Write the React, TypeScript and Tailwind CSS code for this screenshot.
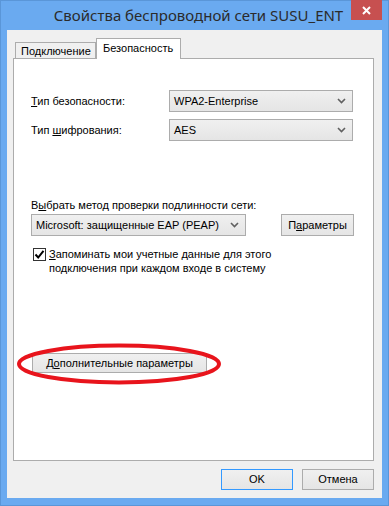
import React from "react";

const font = { fontFamily: '"Liberation Sans", Arial, sans-serif' };
const titleFont = { fontFamily: '"Noto Sans", "Open Sans", sans-serif' };

function Chevron() {
  return (
    <svg width="9" height="6" viewBox="0 0 9 6" className="flex-shrink-0">
      <path d="M1 1 L4.5 4.5 L8 1" fill="none" stroke="#606060" strokeWidth="1.6" />
    </svg>
  );
}

function Select({ value, className }: { value: string; className: string }) {
  return (
    <div
      className={`flex items-center justify-between h-[22px] pl-[4px] pr-[6px] border border-[#acacac] bg-gradient-to-b from-[#f0f0f0] to-[#e5e5e5] text-[11px] text-black whitespace-nowrap ${className}`}
    >
      <span>{value}</span>
      <Chevron />
    </div>
  );
}

function Button({ children, className }: { children: React.ReactNode; className: string }) {
  return (
    <div
      className={`flex items-center justify-center border bg-gradient-to-b from-[#f0f0f0] to-[#e5e5e5] text-[11px] text-black whitespace-nowrap ${className}`}
    >
      {children}
    </div>
  );
}

export default function App() {
  return (
    <div style={font} className="w-[389px] h-[506px] bg-[#6aaaf0] border border-[#5a96d8] flex flex-col">
      {/* Title bar */}
      <div className="relative h-[29px] flex items-center justify-center">
        <span style={titleFont} className="text-[15px] text-[#2b2b2b] pl-[8px] whitespace-nowrap">
          Свойства беспроводной сети SUSU_ENT
        </span>
        <div className="absolute right-[6px] top-[-1px] w-[31px] h-[20px] bg-[#c75050] flex items-center justify-center">
          <svg width="9" height="9" viewBox="0 0 9 9">
            <path d="M1 1 L8 8 M8 1 L1 8" stroke="white" strokeWidth="2" />
          </svg>
        </div>
      </div>

      {/* Body */}
      <div className="mx-[6px] h-[468px] bg-[#f0f0f0] flex flex-col pl-[6px] pr-[8px] pt-[8px]">
        {/* Tabs */}
        <div className="flex items-end h-[20px] text-[11px] text-black whitespace-nowrap">
          <div className="ml-[2px] h-[16px] w-[81px] border border-b-0 border-[#acacac] bg-[#f0f0f0] pl-[5px] leading-[16px]">
            Подключение
          </div>
          <div className="relative z-10 -mb-px h-[21px] w-[85px] border border-b-0 border-[#acacac] bg-white pl-[6px] leading-[18px]">
            Безопасность
          </div>
        </div>

        {/* Panel */}
        <div className="h-[403px] border border-[#acacac] bg-white pl-[17px] pr-[18px] pt-[31px] text-[11px] text-black whitespace-nowrap">
          <div className="flex items-center">
            <span className="w-[138px]">
              <span className="underline">Т</span>ип безопасности:
            </span>
            <Select value="WPA2-Enterprise" className="w-[184px]" />
          </div>
          <div className="flex items-center mt-[7px]">
            <span className="w-[138px]">
              Тип <span className="underline">ш</span>ифрования:
            </span>
            <Select value="AES" className="w-[184px]" />
          </div>

          <div className="mt-[56px] leading-[16px]">
            В<span className="underline">ы</span>брать метод проверки подлинности сети:
          </div>
          <div className="flex items-center mt-[1px]">
            <Select value="Microsoft: защищенные EAP (PEAP)" className="w-[215px]" />
            <Button className="ml-[35px] w-[73px] h-[22px] border-[#acacac]">
              П<span className="underline">а</span>раметры
            </Button>
          </div>

          <div className="flex items-start mt-[11px] ml-[2px]">
            <div className="w-[13px] h-[13px] mt-[1px] border border-[#333] bg-white flex items-center justify-center flex-shrink-0">
              <svg width="11" height="11" viewBox="0 0 11 11">
                <path d="M1.5 5.5 L4.2 8.5 L9.5 1.8" fill="none" stroke="#000" strokeWidth="2" />
              </svg>
            </div>
            <div className="ml-[3px] leading-[14px]">
              <span className="underline">З</span>апоминать мои учетные данные для этого
              <br />
              подключения при каждом входе в систему
            </div>
          </div>

          <div className="relative mt-[78px] ml-[1px] w-[175px]">
            <Button className="w-[175px] h-[20px] border-[#acacac]">
              Д<span className="underline">о</span>полнительные параметры
            </Button>
            <svg
              className="absolute left-[-16px] top-[-10px] pointer-events-none"
              width="206"
              height="42"
              viewBox="0 0 206 42"
            >
              <ellipse cx="103" cy="21" rx="100" ry="18.5" fill="none" stroke="#e8141c" strokeWidth="4" />
            </svg>
          </div>
        </div>

        {/* Bottom buttons */}
        <div className="flex justify-end gap-[9px] mt-[8px]">
          <Button className="w-[72px] h-[21px] border-[#3399ff]">OK</Button>
          <Button className="w-[72px] h-[21px] border-[#acacac]">Отмена</Button>
        </div>
      </div>
    </div>
  );
}
